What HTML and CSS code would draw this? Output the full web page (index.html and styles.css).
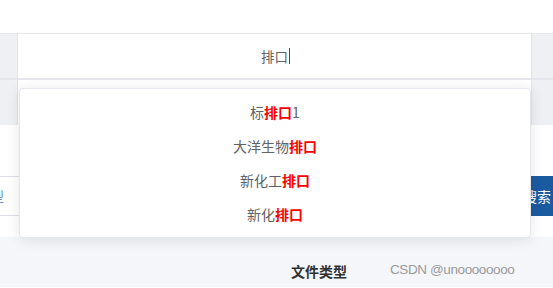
FILE: index.html
```html
<!DOCTYPE html>
<html lang="zh">
<head>
<meta charset="utf-8">
<link rel="stylesheet" href="styles.css">
</head>
<body>
<div class="page">
  <div class="header"></div>
  <div class="table">
    <div class="row row-input">
      <div class="side side-left"></div>
      <div class="cell"><span class="typed">排口</span><span class="caret"></span></div>
      <div class="side side-right"></div>
    </div>
    <div class="row row-second">
      <div class="side side-left"></div>
      <div class="cell"></div>
      <div class="side side-right"></div>
    </div>
  </div>
  <div class="form">
    <div class="form-line">
      <div class="field"><span class="field-label">文件类型</span></div>
      <button class="search-btn">搜索</button>
    </div>
  </div>
  <div class="footer">
    <span class="footer-label">文件类型</span>
  </div>

  <ul class="dropdown">
    <li>标<b>排口</b>1</li>
    <li>大洋生物<b>排口</b></li>
    <li>新化工<b>排口</b></li>
    <li>新化<b>排口</b></li>
  </ul>
  <div class="watermark">CSDN @unoooooooo</div>
</div>
</body>
</html>
```

FILE: styles.css
```css
* { box-sizing: border-box; }
html, body { margin: 0; padding: 0; }
body {
  width: 553px;
  height: 288px;
  overflow: hidden;
  background: #ffffff;
  font-family: "Noto Sans CJK SC", "Noto Sans", sans-serif;
  color: #606266;
}
.page {
  position: relative;
  width: 553px;
  height: 288px;
  overflow: hidden;
}
.header {
  height: 33px;
  background: #ffffff;
}
.table {
  border-top: 1px solid #e4e6ec;
}
.row {
  display: grid;
  grid-template-columns: 18px 1fr 22px;
}
.row-input {
  height: 46px;
  border-bottom: 2px solid #e4e6ec;
}
.row-second {
  height: 45px;
}
.side {
  background: #eff0f4;
}
.side-left { border-right: 1px solid #e2e4ea; }
.side-right { border-left: 1px solid #e2e4ea; }
.cell {
  background: #ffffff;
  display: flex;
  align-items: center;
  justify-content: center;
  padding-left: 2px;
}
.typed {
  font-size: 13.5px;
  color: #606266;
  line-height: 16px;
}
.caret {
  display: inline-block;
  width: 1px;
  height: 16px;
  background: #4a4a4a;
  margin-left: 1px;
}
.form {
  height: 112px;
  background: #ffffff;
  padding-top: 51px;
}
.form-line {
  display: flex;
  align-items: flex-start;
  height: 40px;
}
.field {
  flex: 1;
  height: 40px;
  border-top: 1px solid #dcdfe6;
  border-bottom: 1px solid #dcdfe6;
  display: flex;
  align-items: center;
  margin-left: -52px;
}
.field-label {
  font-size: 14px;
  color: #6d8fc9;
}
.search-btn {
  width: 60px;
  height: 40px;
  border: none;
  background: #1a5a9f;
  color: #ffffff;
  font-family: "Noto Sans CJK SC", sans-serif;
  font-size: 14px;
  padding: 0 2px 0 0;
  text-align: right;
}
.footer {
  height: 50px;
  background: #f5f6fa;
  padding-left: 291px;
  padding-top: 21px;
}
.footer-label {
  font-size: 14px;
  font-weight: bold;
  color: #303133;
  line-height: 18px;
}
.dropdown {
  position: absolute;
  left: 19px;
  top: 88px;
  width: 512px;
  margin: 0;
  padding: 6px 0;
  list-style: none;
  background: #ffffff;
  border: 1px solid #e4e7ed;
  border-radius: 4px;
  box-shadow: 0 2px 14px rgba(0, 0, 0, 0.1);
}
.dropdown li {
  height: 34px;
  line-height: 34px;
  text-align: center;
  font-size: 14px;
  color: #606266;
}
.dropdown b {
  color: #ff0000;
  font-weight: bold;
}
.watermark {
  position: absolute;
  left: 390px;
  top: 261px;
  font-family: "Liberation Sans", Arial, sans-serif;
  font-size: 13.5px;
  letter-spacing: -0.4px;
  color: #9a9a9a;
  line-height: 17px;
}
```
